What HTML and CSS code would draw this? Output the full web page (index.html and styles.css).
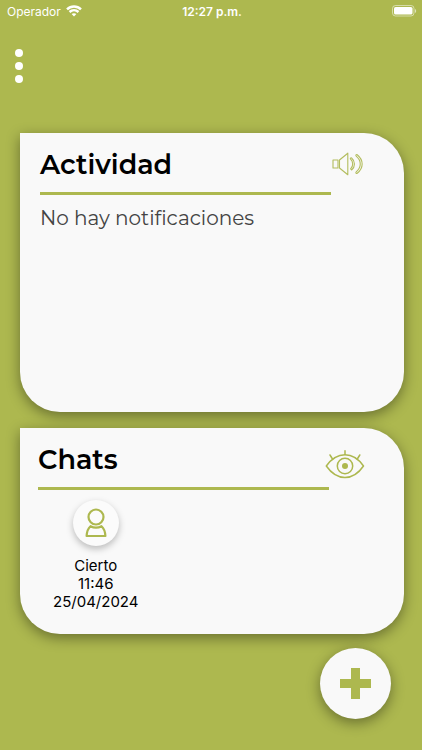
FILE: index.html
```html
<!DOCTYPE html>
<html lang="es">
<head>
  <meta charset="UTF-8">
  <meta name="viewport" content="width=device-width, initial-scale=1">
  <title>Actividad</title>
  <link rel="stylesheet" href="styles.css">
</head>
<body>

  <div class="status-bar">
    <div class="carrier">
      <span>Operador</span>
      <svg width="16" height="12" viewBox="0 0 16 12" fill="none" stroke="#fff" stroke-width="2.4">
        <path d="M1 4.400C5 .5 11 .5 15 4.400M3.500 7c2.600-2.400 6.400-2.400 9 0"/>
        <path d="M8 11.500L5.600 9.100c1.400-1.200 3.400-1.200 4.800 0z" fill="#fff" stroke="none"/>
      </svg>
    </div>
    <span class="clock">12:27 p.m.</span>
    <svg class="battery" width="25" height="12" viewBox="0 0 25 12">
      <rect x=".5" y=".5" width="21.5" height="10.5" rx="3" fill="none" stroke="#fff" stroke-opacity=".5"/>
      <rect x="2" y="2" width="18.5" height="7.5" rx="1.6" fill="#fff"/>
      <path d="M23 4v4c1.600-.6 1.600-3.400 0-4z" fill="#fff" fill-opacity=".6"/>
    </svg>
  </div>

  <header class="top-bar">
    <button class="menu-button" aria-label="Menú">
      <span class="dot"></span>
      <span class="dot"></span>
      <span class="dot"></span>
    </button>
  </header>

  <main class="content">
    <section class="card activity">
      <div class="card-header">
        <h2>Actividad</h2>
        <button class="icon-button" aria-label="Sonido">
          <svg width="32" height="24" viewBox="0 0 32 24" fill="none" stroke="#b3bd5e" stroke-width="1.1" stroke-linejoin="round" stroke-linecap="round">
            <rect x="1" y="8" width="5" height="8"/>
            <path d="M7.500 8L15.800 1.200v21.600L7.500 16z"/>
            <path d="M19.600 6c3.800 3.200 3.800 8.800 0 12l-1-1.200c2.800-2.600 2.800-7 0-9.600-.8-.8.2-1.800 1-1.200z"/>
            <path d="M25.200 2.700c6.600 5.300 6.600 13.300 0 18.600-.9.600-1.900-.6-1-1.400 5.400-4.600 5.400-11.200 0-15.800-.9-.8.1-2 1-1.400z"/>
          </svg>
        </button>
      </div>
      <p class="empty-text">No hay notificaciones</p>
    </section>

    <section class="card chats">
      <div class="card-header">
        <h2>Chats</h2>
        <button class="icon-button" aria-label="Ver chats">
          <svg width="40" height="30" viewBox="0 0 40 30" fill="none" stroke="#adb84f" stroke-width="1.5" stroke-linecap="round" stroke-linejoin="round">
            <path d="M1.300 16C12 1 28 1 38.500 16C28 31.300 12 31.300 1.300 16z"/>
            <circle cx="20" cy="16" r="7.700"/>
            <circle cx="20" cy="16" r="3" fill="#adb84f" stroke="none"/>
            <path d="M20 4.500V.8M7.500 9L5 5M32.300 9L34.800 5"/>
          </svg>
        </button>
      </div>
      <a class="chat" href="#">
        <span class="avatar">
          <svg width="22" height="30" viewBox="0 0 22 30" fill="none" stroke="#adb84f" stroke-width="2.2" stroke-linejoin="round">
            <circle cx="11" cy="9" r="7.500"/>
            <path d="M5.500 18.200c3.500 1.900 7.500 1.900 11 0 2.600 2.300 3.700 5.600 3.900 9.800H1.600c.2-4.200 1.300-7.500 3.900-9.800z"/>
          </svg>
        </span>
        <span>Cierto</span>
        <span>11:46</span>
        <span>25/04/2024</span>
      </a>
    </section>
  </main>

  <footer class="actions">
    <button class="add-button" aria-label="Nuevo chat">
      <svg width="31" height="31" viewBox="0 0 31 31">
        <path d="M11 0h9v11h11v9H20v11h-9V20H0v-9h11z" fill="#adb84f"/>
      </svg>
    </button>
  </footer>

</body>
</html>
```
FILE: styles.css
```css
* {
  box-sizing: border-box;
}
body {
  margin: 0;
  min-height: 100vh;
  background-color: #adb84f;
  font-family: Inter, Arial, sans-serif;
  color: #000;
}
button {
  padding: 0;
  border: none;
  background: none;
  cursor: pointer;
}
svg {
  display: block;
}
h2 {
  margin: 0;
  font-family: Montserrat, Inter, sans-serif;
  font-size: 27px;
  line-height: 36px;
  font-weight: 600;
}
.status-bar {
  display: grid;
  grid-template-columns: 1fr auto 1fr;
  align-items: center;
  height: 22px;
  padding: 0 5px 0 7px;
  font-size: 12px;
  color: #fff;
}
.carrier {
  display: flex;
  align-items: center;
  gap: 5px;
}
.clock {
  font-weight: 600;
}
.battery {
  justify-self: end;
}
.top-bar {
  padding: 26px 14px 0;
  height: 111px;
}
.menu-button {
  display: flex;
  flex-direction: column;
  gap: 5px;
  padding: 1px;
}
.dot {
  width: 8px;
  height: 8px;
  border-radius: 50%;
  background: #fff;
}
.content {
  display: flex;
  flex-direction: column;
  gap: 16px;
  padding: 0 18px 0 20px;
}
.card {
  padding: 14px 40px 23px 20px;
  background: #f9f9f9;
  border-radius: 0 40px 40px 40px;
  box-shadow: 0 4px 14px rgba(0, 0, 0, 0.4);
}
.activity {
  min-height: 279px;
}
.chats {
  padding-left: 18px;
  padding-right: 39px;
}
.card-header {
  display: flex;
  justify-content: space-between;
  position: relative;
  padding-bottom: 12px;
}
.card-header::after {
  content: "";
  position: absolute;
  left: 0;
  right: 33px;
  bottom: 0;
  height: 3px;
  background: #adb84f;
}
.chats .card-header::after {
  right: 36px;
}
.icon-button {
  display: flex;
  align-items: center;
  height: 34px;
}
.chats .icon-button {
  height: 46px;
  margin-bottom: -10px;
}
.empty-text {
  margin: 9px 0 0;
  font-family: Montserrat, Inter, sans-serif;
  font-size: 20px;
  line-height: 28px;
  font-weight: 400;
  color: #444;
}
.chat {
  display: inline-flex;
  flex-direction: column;
  align-items: center;
  margin: 10px 0 0 15px;
  font-size: 15px;
  line-height: 18px;
  color: #000;
  text-decoration: none;
}
.avatar {
  display: flex;
  align-items: center;
  justify-content: center;
  width: 46px;
  height: 46px;
  margin-bottom: 11px;
  border-radius: 50%;
  background: #fbfbfb;
  box-shadow: 0 3px 7px rgba(0, 0, 0, 0.25);
}
.actions {
  display: flex;
  justify-content: flex-end;
  padding: 14px 31px 0;
}
.add-button {
  display: flex;
  align-items: center;
  justify-content: center;
  width: 71px;
  height: 71px;
  border-radius: 50%;
  background: #f9f9f9;
  box-shadow: 0 4px 14px rgba(0, 0, 0, 0.4);
}
```
